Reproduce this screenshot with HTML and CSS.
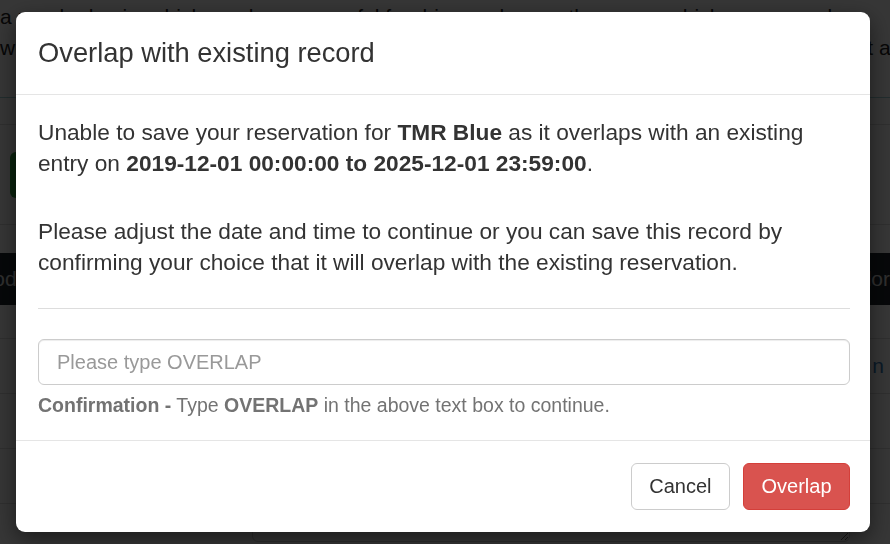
FILE: index.html
```html
<!DOCTYPE html>
<html lang="en">
  <head>
    <meta charset="UTF-8" />
    <meta name="viewport" content="width=device-width, initial-scale=1.0" />
    <title>Reservations</title>
    <link rel="stylesheet" href="styles.css">
  </head>
  <body>
    <div class="page">
      <div class="intro">
        <p class="intro-line">a regular basis, which can be very useful for drivers who use the same vehicle every week.</p>
        <p class="intro-line">week. Recurring bookings are shown below and can be edited or removed at any time, so that a</p>
      </div>
      <div class="rule rule-teal"></div>
      <div class="spacer-row"></div>
      <div class="toolbar">
        <button class="btn-add">Add</button>
      </div>
      <div class="table-head">
        <span class="head-left">Period</span>
        <span class="head-right">Vendor</span>
      </div>
      <div class="table-row first-row"></div>
      <div class="table-row"><a class="row-link" href="#">n</a></div>
      <div class="table-row"></div>
      <div class="table-row"></div>
      <div class="notes">
        <textarea class="notes-box"></textarea>
      </div>
    </div>

    <div class="backdrop"></div>

    <div class="modal">
      <div class="modal-header">
        <h4 class="modal-title">Overlap with existing record</h4>
      </div>
      <div class="modal-body">
        <p>Unable to save your reservation for <strong>TMR Blue</strong> as it overlaps with an existing entry on <strong>2019-12-01 00:00:00 to 2025-12-01 23:59:00</strong>.</p>
        <p class="last">Please adjust the date and time to continue or you can save this record by confirming your choice that it will overlap with the existing reservation.</p>
        <hr />
        <input type="text" class="form-control" placeholder="Please type OVERLAP" />
        <span class="help-block"><strong>Confirmation -</strong> Type <strong>OVERLAP</strong> in the above text box to continue.</span>
      </div>
      <div class="modal-footer">
        <button class="btn btn-default">Cancel</button>
        <button class="btn btn-danger">Overlap</button>
      </div>
    </div>
  </body>
</html>
```

FILE: styles.css
```css
body {
    margin: 0;
    background-color: #fff;
    font-family: "Liberation Sans", Arial, sans-serif;
    color: #333;
    overflow: hidden;
}

/* Page behind the dialog */
.page {
    height: 544px;
    overflow: hidden;
}

.intro {
    padding-top: 1px;
    height: 96px;
}

.intro-line {
    margin: 0;
    font-size: 21px;
    line-height: 31px;
    white-space: nowrap;
    color: #222;
}

.rule {
    border-top: 1px solid #ddd;
}

.rule-teal {
    border-top-color: #9fd0d6;
}

.spacer-row {
    height: 26px;
    border-bottom: 1px solid #ddd;
}

.toolbar {
    height: 100px;
    padding-top: 27px;
    box-sizing: border-box;
    border-bottom: 1px solid #ddd;
}

.btn-add {
    margin-left: 10px;
    height: 46px;
    width: 90px;
    background-color: #2e9e3a;
    border: none;
    border-radius: 6px;
    color: #fff;
    font-size: 20px;
}

.table-head {
    margin-top: 28px;
    height: 52px;
    background-color: #1d252c;
    color: #ddd;
    font-size: 21px;
    display: flex;
    justify-content: space-between;
    align-items: center;
    white-space: nowrap;
}

.head-left {
    margin-left: -44px;
}

.head-right {
    margin-right: 0;
}

.table-row {
    height: 54px;
    border-bottom: 1px solid #ddd;
    display: flex;
    justify-content: flex-end;
    align-items: center;
}

.table-row.first-row {
    height: 33px;
}

.row-link {
    color: #337ab7;
    font-size: 21px;
    text-decoration: none;
    margin-right: 6px;
}

.notes {
    margin-top: -32px;
    padding-left: 252px;
}

.notes-box {
    width: 598px;
    height: 70px;
    box-sizing: border-box;
    border: 1px solid #ccc;
    border-radius: 6px;
    display: block;
}

/* Dim layer */
.backdrop {
    position: fixed;
    top: 0;
    left: 0;
    right: 0;
    bottom: 0;
    background-color: rgba(0, 0, 0, 0.79);
}

/* Dialog */
.modal {
    position: fixed;
    top: 12px;
    left: 16px;
    width: 854px;
    background-color: #fff;
    border-radius: 9px;
    box-shadow: 0 7px 22px rgba(0, 0, 0, 0.5);
}

.modal-header {
    padding: 22px;
    border-bottom: 1px solid #e5e5e5;
}

.modal-title {
    margin: 0;
    font-size: 27.3px;
    font-weight: normal;
    line-height: 38px;
    color: #333;
}

.modal-body {
    padding: 22px 20px 22px 22px;
}

.modal-body p {
    margin: 0 0 37px;
    font-size: 22.7px;
    line-height: 31px;
    color: #333;
}

.modal-body p.last {
    margin-bottom: 0;
}

hr {
    margin: 30px 0;
    border: 0;
    border-top: 1px solid #ddd;
}

.form-control {
    display: block;
    width: 100%;
    height: 46px;
    box-sizing: border-box;
    padding: 0 18px;
    border: 1px solid #ccc;
    border-radius: 6px;
    font-family: inherit;
    font-size: 20px;
    color: #555;
    box-shadow: inset 0 1px 1px rgba(0, 0, 0, 0.075);
}

.form-control::placeholder {
    color: #999;
}

.help-block {
    display: block;
    margin-top: 7px;
    font-size: 19.5px;
    line-height: 26px;
    color: #737373;
}

.modal-footer {
    padding: 22px 20px 22px 22px;
    border-top: 1px solid #e5e5e5;
    display: flex;
    justify-content: flex-end;
    gap: 13px;
}

.btn {
    height: 47px;
    padding: 0 17.5px;
    border-radius: 6px;
    font-family: inherit;
    font-size: 20px;
    cursor: pointer;
}

.btn-default {
    background-color: #fff;
    border: 1px solid #ccc;
    color: #333;
}

.btn-danger {
    background-color: #d9534f;
    border: 1px solid #d43f3a;
    color: #fff;
}
```
